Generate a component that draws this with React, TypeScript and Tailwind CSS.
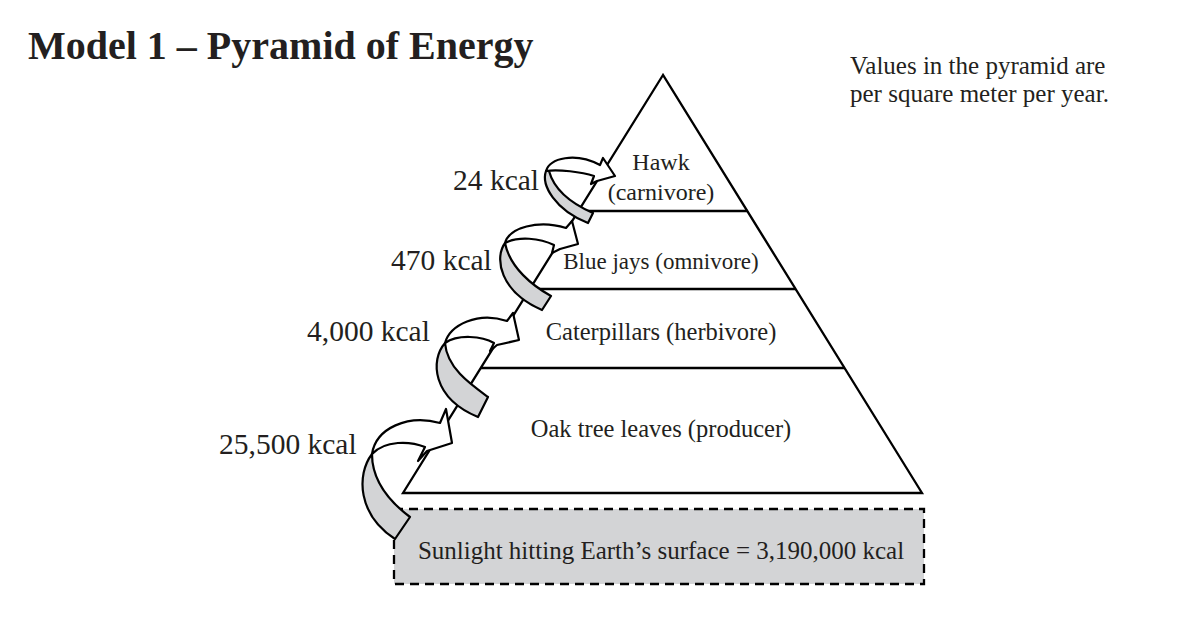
const INK = "#231f20"
const SHADE = "#d3d4d6"

// left / right edges of the pyramid at a given y
const leftX = (y: number) => 663 - (260 / 418) * (y - 75)
const rightX = (y: number) => 663 + (259 / 418) * (y - 75)

const levels = [211, 289, 368]

type Arrow = { back: string; front: string }

// each flow arrow: a gray underside band and a white top band ending in a head
const arrows: Arrow[] = [
  {
    back: "M546,171 C541,185 555,210 588,223 L593,213 C577,206 555,193 549,171 Z",
    front:
      "M546,171 C550,158 575,152 600,165 L603,158 L615,176 L597,181 L591,184 L594,176 C582,172 558,169 546,171 Z",
  },
  {
    back: "M505,243 C494,258 500,292 542,310 L551,296 C533,286 510,268 505,243 Z",
    front:
      "M505,243 C509,228 538,219 566,228 L572,221 L578,244 L560,249 L552,253 L554,245 C540,238 518,236 505,243 Z",
  },
  {
    back: "M445,343 C430,360 432,398 478,417 L488,397 C470,384 447,368 445,343 Z",
    front:
      "M445,343 C450,325 478,311 507,321 L513,313 L519,340 L497,345 L490,351 L494,343 C482,336 458,334 445,343 Z",
  },
  {
    back: "M372,454 C356,475 358,515 395,539 L410,517 C390,502 372,482 372,454 Z",
    front:
      "M372,454 C376,428 408,414 440,423 L446,409 L452,443 L427,451 L418,461 L425,447 C410,441 385,440 372,454 Z",
  },
]

const values = [
  { text: "24 kcal", x: 453, y: 190 },
  { text: "470 kcal", x: 391, y: 270 },
  { text: "4,000 kcal", x: 307, y: 341 },
  { text: "25,500 kcal", x: 219, y: 454 },
]

const tiers = [
  { text: "Hawk", y: 170, size: 24 },
  { text: "(carnivore)", y: 200, size: 24 },
  { text: "Blue jays (omnivore)", y: 269, size: 23 },
  { text: "Caterpillars (herbivore)", y: 340, size: 24.5 },
  { text: "Oak tree leaves (producer)", y: 437, size: 24.5 },
]

function EnergyPyramid() {
  return (
    <svg
      className="absolute inset-0 h-[620px] w-[1198px]"
      viewBox="0 0 1198 620"
      fontFamily="'Liberation Serif', serif"
    >
      {/* sunlight box */}
      <rect
        x={394}
        y={509}
        width={530}
        height={75}
        fill={SHADE}
        stroke="#000"
        strokeWidth={2.3}
        strokeDasharray="9 6"
      />
      <text x={661} y={559} textAnchor="middle" fontSize={25} fill={INK}>
        Sunlight hitting Earth’s surface = 3,190,000 kcal
      </text>

      {/* pyramid */}
      <polygon points="663,75 403,493 922,493" fill="#fff" stroke="#000" strokeWidth={2.3} strokeLinejoin="miter" />
      {levels.map((y) => (
        <line key={y} x1={leftX(y)} y1={y} x2={rightX(y)} y2={y} stroke="#000" strokeWidth={2.3} />
      ))}

      {tiers.map((t) => (
        <text key={t.text} x={661} y={t.y} textAnchor="middle" fontSize={t.size} fill={INK}>
          {t.text}
        </text>
      ))}

      {/* arrows between levels */}
      {arrows.map((a, i) => (
        <g key={i} stroke="#000" strokeWidth={2.2} strokeLinejoin="round">
          <path d={a.back} fill={SHADE} />
          <path d={a.front} fill="#fff" />
        </g>
      ))}

      {values.map((v) => (
        <text key={v.text} x={v.x} y={v.y} fontSize={29.5} fill={INK}>
          {v.text}
        </text>
      ))}
    </svg>
  )
}

export default function App() {
  return (
    <div className="relative h-[620px] w-[1198px] overflow-hidden bg-white font-['Liberation_Serif',serif] text-[#231f20]">
      <header className="relative z-10 flex items-start pl-[28px] pt-[26px]">
        <h1 className="w-[822px] text-[40px] font-bold leading-[40px]">Model 1 – Pyramid of Energy</h1>
        <p className="mt-[26px] text-[25px] leading-[28px]">
          Values in the pyramid are
          <br />
          per square meter per year.
        </p>
      </header>
      <EnergyPyramid />
    </div>
  )
}
